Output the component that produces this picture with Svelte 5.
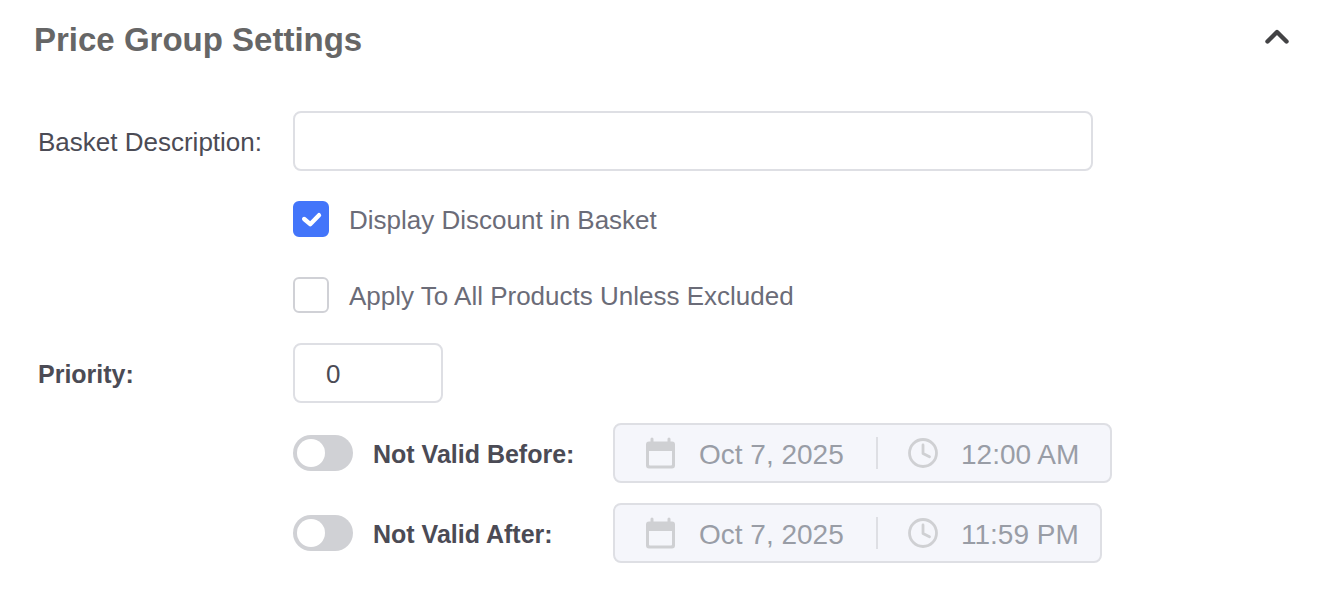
<script>
  let open = $state(true);
  let description = $state("");
  let displayDiscount = $state(true);
  let applyToAll = $state(false);
  let priority = $state("0");

  let limits = $state([
    { id: "before", label: "Not Valid Before:", enabled: false, date: "Oct 7, 2025", time: "12:00 AM", timeWidth: 172 },
    { id: "after", label: "Not Valid After:", enabled: false, date: "Oct 7, 2025", time: "11:59 PM", timeWidth: 162 }
  ]);
</script>

<section class="panel">
  <header>
    <h2>Price Group Settings</h2>
    <button type="button" class="collapse" class:closed={!open} aria-label="Toggle section" aria-expanded={open} onclick={() => open = !open}>
      <svg width="28" height="24" viewBox="0 0 28 24" fill="none" stroke="#434345" stroke-width="4.400" stroke-linecap="round" stroke-linejoin="round">
        <path d="M4.500 16.500 14 7l9.500 9.500" />
      </svg>
    </button>
  </header>

  {#if open}
  <form>
    <div class="row">
      <label class="name" for="description">Basket Description:</label>
      <input class="field" id="description" type="text" bind:value={description} />
    </div>

    <div class="row check">
      <input id="display" type="checkbox" bind:checked={displayDiscount} />
      <label for="display">Display Discount in Basket</label>
    </div>

    <div class="row check">
      <input id="apply" type="checkbox" bind:checked={applyToAll} />
      <label for="apply">Apply To All Products Unless Excluded</label>
    </div>

    <div class="row">
      <label class="name strong" for="priority">Priority:</label>
      <input class="field short" id="priority" type="text" inputmode="numeric" bind:value={priority} />
    </div>

    {#each limits as limit (limit.id)}
      <div class="row limit">
        <div class="switch">
          <input id={limit.id} type="checkbox" role="switch" bind:checked={limit.enabled} />
          <label class="strong" for={limit.id}>{limit.label}</label>
        </div>
        <div class="datetime" class:disabled={!limit.enabled}>
          <svg width="30" height="32" viewBox="0 0 30 32" fill="#cfd0d3">
            <path fill-rule="evenodd" d="M4.500 2a1.500 1.500 0 0 1 3 0v2.500h14V2a1.500 1.500 0 0 1 3 0v2.500h1.500a3 3 0 0 1 3 3V28.500a3 3 0 0 1-3 3H3a3 3 0 0 1-3-3v-21a3 3 0 0 1 3-3h1.500zM3 14v13.500a1 1 0 0 0 1 1h21a1 1 0 0 0 1-1V14z" />
          </svg>
          <input class="date" type="text" aria-label="{limit.label} date" bind:value={limit.date} disabled={!limit.enabled} />
          <span class="divider"></span>
          <svg width="30" height="30" viewBox="0 0 30 30" fill="none" stroke="#cfd0d3" stroke-width="2.800" stroke-linecap="round" stroke-linejoin="round">
            <circle cx="15" cy="15" r="13.500" />
            <path d="M15 7v8.500l6.500 3.300" />
          </svg>
          <input class="time" type="text" aria-label="{limit.label} time" style="width: {limit.timeWidth}px" bind:value={limit.time} disabled={!limit.enabled} />
        </div>
      </div>
    {/each}
  </form>
  {/if}
</section>

<style>
  :global(body){
    background: #fff;
  }

  .panel{
    padding: 20px 49px 24px 34px;
    font-family: "Liberation Sans", Arial, sans-serif;
    font-size: 26px;
    line-height: 32px;
    color: #4b4b55;
  }

  header{
    display: flex;
    justify-content: space-between;
    align-items: flex-start;
    margin-bottom: 51px;
  }

  h2{
    margin: 0;
    font-size: 33px;
    line-height: 40px;
    color: #666;
  }

  .collapse{
    padding: 5px 0;
    border: 0;
    background: none;
    cursor: pointer;
  }

  .collapse.closed svg{
    transform: rotate(180deg);
  }

  svg{
    display: block;
    flex: none;
  }

  form{
    display: flex;
    flex-direction: column;
    gap: 20px;
    padding-left: 4px;
  }

  .row{
    display: flex;
    align-items: center;
  }

  label{
    padding-top: 2px;
  }

  .name{
    flex: none;
    width: 255px;
  }

  .strong{
    font-size: 25px;
    font-weight: bold;
  }

  input{
    box-sizing: border-box;
    margin: 0;
    font: inherit;
    color: inherit;
  }

  .field{
    width: 100%;
    max-width: 800px;
    height: 60px;
    padding: 2px 31px 0;
    border: 2px solid #dedfe4;
    border-radius: 8px;
    background: #fff;
  }

  .field.short{
    width: 150px;
  }

  .check{
    gap: 20px;
    height: 56px;
    padding-left: 255px;
    color: #6b6c78;
  }

  .check input{
    appearance: none;
    flex: none;
    width: 36px;
    height: 36px;
    border: 2px solid #d0d1d6;
    border-radius: 6px;
    background: #fff;
  }

  .check input:checked{
    border-color: #4375fa;
    background: #4375fa url("data:image/svg+xml,%3Csvg xmlns='http://www.w3.org/2000/svg' viewBox='0 0 32 32' fill='none' stroke='white' stroke-width='4.400' stroke-linecap='round' stroke-linejoin='round'%3E%3Cpath d='M9.200 16l6 5.200L24 12.200'/%3E%3C/svg%3E") center / 32px no-repeat;
  }

  .limit{
    padding-left: 255px;
  }

  .switch{
    display: flex;
    align-items: center;
    gap: 20px;
    flex: none;
    width: 320px;
  }

  .switch input{
    appearance: none;
    display: flex;
    flex: none;
    width: 60px;
    height: 36px;
    padding: 4px;
    border-radius: 18px;
    background: #d0d1d5;
  }

  .switch input::before{
    content: "";
    width: 28px;
    height: 28px;
    border-radius: 50%;
    background: #fff;
  }

  .switch input:checked{
    justify-content: flex-end;
    background: #4375fa;
  }

  .datetime{
    box-sizing: border-box;
    display: flex;
    align-items: center;
    height: 60px;
    padding-left: 31px;
    border: 2px solid #dedfe4;
    border-radius: 8px;
    font-size: 28px;
    color: #999da6;
  }

  .datetime.disabled{
    background: #f5f6fb;
  }

  .datetime input{
    height: 56px;
    padding: 4px 0 0 23px;
    border: 0;
    background: none;
  }

  .datetime .date{
    width: 200px;
  }

  .divider{
    width: 2px;
    height: 32px;
    margin-right: 30px;
    background: #dedfe4;
  }
</style>
